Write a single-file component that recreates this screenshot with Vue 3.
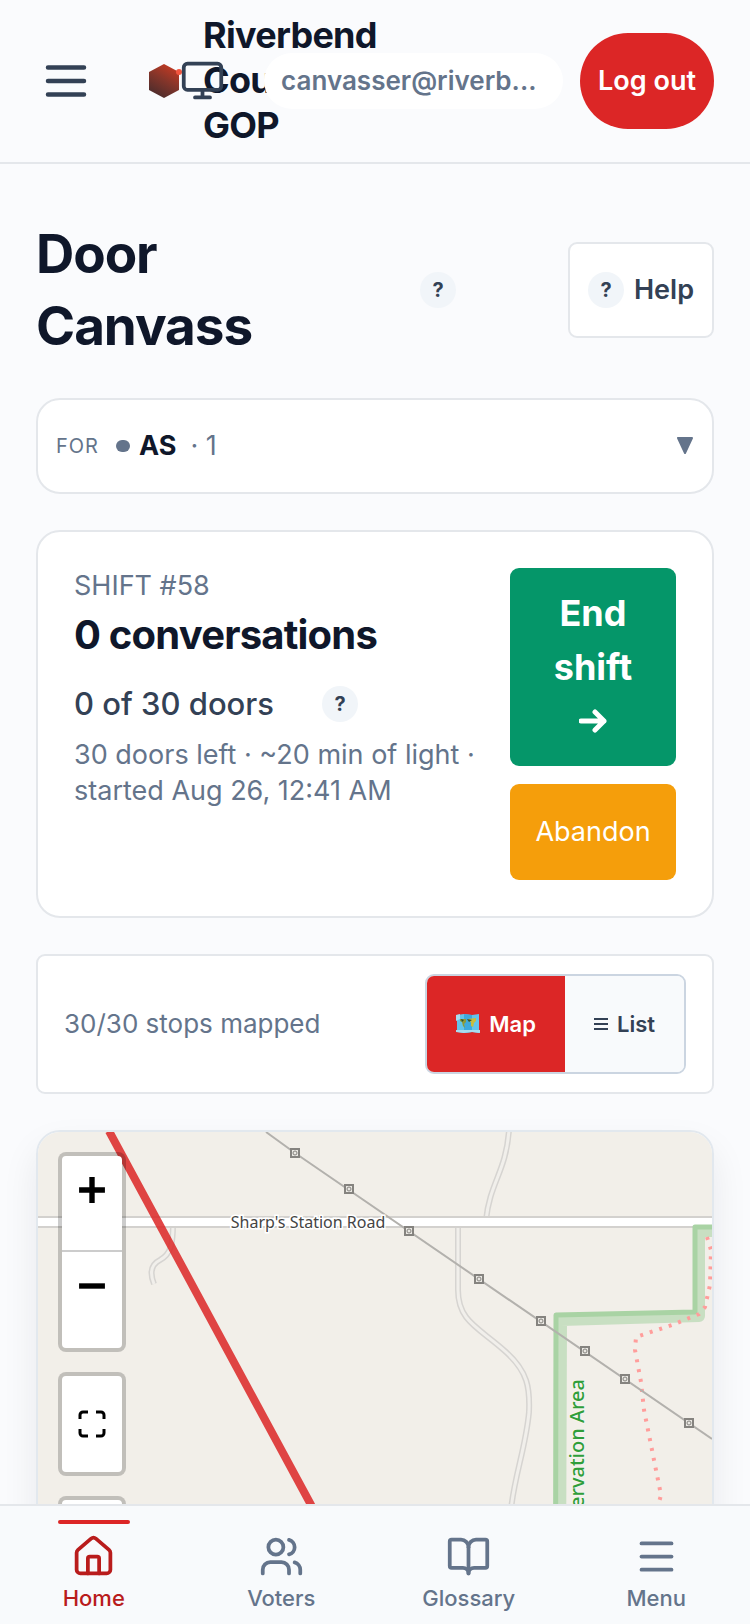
<template>
  <div class="app">
    <header class="topbar">
      <button class="menuBtn" aria-label="Open menu">
        <svg viewBox="0 0 24 24" class="icon iconLg"><path d="M4 6h16M4 12h16M4 18h16" /></svg>
      </button>

      <div class="brand">
        <svg class="logo" viewBox="0 0 34 34">
          <defs>
            <linearGradient id="hex" x1="0.8" y1="0" x2="0.3" y2="1">
              <stop offset="0" stop-color="#c93a22" />
              <stop offset="0.5" stop-color="#84352a" />
              <stop offset="1" stop-color="#4a2c2c" />
            </linearGradient>
          </defs>
          <path d="M15 0 30 8v18L15 34 0 26V8z" fill="url(#hex)" />
          <circle cx="30" cy="8" r="3" fill="#f2563f" />
        </svg>
        <span class="brandName">Riverbend County GOP</span>
      </div>

      <div class="actions">
        <button class="themeBtn" aria-label="Use system theme">
          <svg viewBox="0 0 24 24" class="icon">
            <rect x="2" y="3" width="20" height="14" rx="2" />
            <path d="M8 21h8M12 17v4" />
          </svg>
        </button>
        <span class="email">canvasser@riverb...</span>
        <button class="logout">Log out</button>
      </div>
    </header>

    <main class="content">
      <div class="titleRow">
        <div class="titleGroup">
          <h1>Door Canvass</h1>
          <button class="hint" aria-label="About door canvass"><span class="dot">?</span></button>
        </div>
        <button class="help"><span class="dot">?</span>Help</button>
      </div>

      <button class="picker">
        <span class="pickerLabel">FOR</span>
        <span class="pickerDot"></span>
        <strong>AS</strong>
        <span class="pickerCount">· 1</span>
        <svg class="caret" viewBox="0 0 18 18"><path d="M2 1h14L9 16z" /></svg>
      </button>

      <section class="card shift">
        <div class="shiftInfo">
          <p class="muted">SHIFT #58</p>
          <h2>0 conversations</h2>
          <div class="doors">
            <span>0 of 30 doors</span>
            <button class="hint" aria-label="About doors"><span class="dot">?</span></button>
          </div>
          <p class="muted">30 doors left · ~20 min of light · started Aug 26, 12:41 AM</p>
        </div>
        <div class="shiftActions">
          <button class="endShift">
            End shift
            <svg viewBox="0 0 28 24"><path d="M2 12h23M16 3l9 9-9 9" /></svg>
          </button>
          <button class="abandon">Abandon</button>
        </div>
      </section>

      <section class="card stops">
        <span class="stopCount">30/30 stops mapped</span>
        <div class="toggle">
          <button :class="{ active: view === 'map' }" @click="view = 'map'">
            <svg class="mapEmoji" viewBox="0 0 24 20">
              <path d="M1 1 8 0l8 1 7-1v19l-7-1-8 1-7-1z" fill="#62c4ea" />
              <path d="M8 0l8 1v17l-8 1z" fill="#3da9dc" />
              <path d="M0 1l4-1v5l-4 2zM0 16l24 0v3l-8-1-8 1-8-1z" fill="#a9dcef" />
              <path d="M4 5l6 0 0 3-2 2 1 4-2-2-1-4-2-1z" fill="#8f9a35" />
              <path d="M12 5l8-1 0 3-2 2-1 4-2-1v-4l-3-1z" fill="#c8bd3c" />
              <path d="M11 5l5 1-3 2zM5 5l3 1-2 2z" fill="#2b4f36" />
            </svg>
            Map
          </button>
          <button :class="{ active: view === 'list' }" @click="view = 'list'">
            <svg class="listIcon" viewBox="0 0 14 14"><path d="M0 2h14M0 7h14M0 12h14" /></svg>
            List
          </button>
        </div>
      </section>

      <section class="map">
        <svg class="tiles" viewBox="0 0 674 720" preserveAspectRatio="xMidYMin slice">
          <rect width="674" height="720" fill="#f2efe9" />

          <!-- tracks -->
          <g fill="none">
            <g v-for="(d, i) in tracks" :key="i">
              <path :d="d" stroke="#d6d4d1" stroke-width="6" />
              <path :d="d" stroke="#f1efeb" stroke-width="3" />
            </g>
          </g>

          <!-- main road -->
          <path d="M0 90H674" stroke="#d3d1ce" stroke-width="12" />
          <path d="M0 90H674" stroke="#fff" stroke-width="8" />

          <!-- conservation area -->
          <g fill="none">
            <path d="M674 99H661V184L523 188 521 720" stroke="#c8dfc2" stroke-width="12" stroke-linejoin="round" />
            <path d="M674 95H657V180L518 183 517 720" stroke="#a9d3a4" stroke-width="5" stroke-linejoin="round" />
            <path
              d="M669 105 673 118 672 153 667 175 661 182 634 193 598 205 597 218 603 250 606 278 623 363 620 374"
              stroke="#ff9d9b" stroke-width="4" stroke-dasharray="3 7"
            />
          </g>

          <!-- power line -->
          <path d="M228 0 257 21 674 307" fill="none" stroke="#b3b1ad" stroke-width="2" />
          <g v-for="[x, y] in towers" :key="x">
            <rect :x="x - 4" :y="y - 4" width="8" height="8" fill="#e9e7e2" stroke="#85837f" stroke-width="2" />
            <circle :cx="x" :cy="y" r="2" fill="none" stroke="#85837f" />
          </g>

          <text class="roadName" x="270" y="96" text-anchor="middle">Sharp's Station Road</text>
          <text class="areaName" text-anchor="end" transform="translate(546 247) rotate(-90)">Conservation Area</text>

          <path d="M71 -1 272 371 461 720" fill="none" stroke="#dc2626" stroke-opacity="0.85" stroke-width="8" />
        </svg>

        <div class="controls">
          <div class="controlBox">
            <button aria-label="Zoom in">
              <svg viewBox="0 0 26 26"><path d="M1 13h24M13 1v24" stroke-width="5" /></svg>
            </button>
            <button aria-label="Zoom out">
              <svg viewBox="0 0 26 26"><path d="M1 13h24" stroke-width="5" /></svg>
            </button>
          </div>
          <div class="controlBox">
            <button aria-label="Full screen" class="centered">
              <svg viewBox="0 0 28 28">
                <path d="M2 9V5a3 3 0 0 1 3-3h5M18 2h5a3 3 0 0 1 3 3v4M26 19v4a3 3 0 0 1-3 3h-5M10 26H5a3 3 0 0 1-3-3v-4" stroke-width="3" />
              </svg>
            </button>
          </div>
          <div class="controlBox">
            <button aria-label="Locate me"></button>
          </div>
        </div>
      </section>
    </main>

    <nav class="tabs">
      <a v-for="tab in tabs" :key="tab.label" href="#" :class="{ current: tab.label === current }" @click.prevent="current = tab.label">
        <svg viewBox="0 0 24 24" class="icon">
          <path v-for="d in tab.paths" :key="d" :d="d" />
        </svg>
        {{ tab.label }}
      </a>
    </nav>
  </div>
</template>

<script setup>
import { ref } from 'vue'

const view = ref('map')
const current = ref('Home')

const tabs = [
  {
    label: 'Home',
    paths: [
      'M15 21v-8a1 1 0 0 0-1-1h-4a1 1 0 0 0-1 1v8',
      'M3 10a2 2 0 0 1 .709-1.528l7-5.999a2 2 0 0 1 2.582 0l7 5.999A2 2 0 0 1 21 10v9a2 2 0 0 1-2 2H5a2 2 0 0 1-2-2z',
    ],
  },
  {
    label: 'Voters',
    paths: [
      'M16 21v-2a4 4 0 0 0-4-4H6a4 4 0 0 0-4 4v2',
      'M5 7a4 4 0 1 0 8 0a4 4 0 1 0-8 0',
      'M22 21v-2a4 4 0 0 0-3-3.87',
      'M16 3.13a4 4 0 0 1 0 7.75',
    ],
  },
  {
    label: 'Glossary',
    paths: [
      'M12 7v14',
      'M3 18a1 1 0 0 1-1-1V4a1 1 0 0 1 1-1h5a4 4 0 0 1 4 4 4 4 0 0 1 4-4h5a1 1 0 0 1 1 1v13a1 1 0 0 1-1 1h-6a3 3 0 0 0-3 3 3 3 0 0 0-3-3z',
    ],
  },
  { label: 'Menu', paths: ['M4 5h16', 'M4 12h16', 'M4 19h16'] },
]

const towers = [[257, 21], [311, 57], [371, 99], [441, 147], [503, 189], [547, 219], [587, 247], [651, 291]]

const tracks = [
  'M471 -2C468 40 452 50 448 88',
  'M420 92V158C420 190 442 196 468 220C490 240 492 256 491 280C488 315 476 345 473 378',
  'M135 92C135 112 133 122 122 128C112 133 112 142 116 152',
]
</script>

<style>
body {
  margin: 0;
  background: #fafbfd;
}
</style>

<style scoped>
.app {
  display: flex;
  flex-direction: column;
  height: 100vh;
  background: #fafbfd;
  color: #0f172a;
  font-family: Inter, "Liberation Sans", sans-serif;
  font-size: 27px;
  line-height: 36px;
}

* {
  box-sizing: border-box;
}

button {
  font: inherit;
  color: inherit;
  background: none;
  border: none;
  padding: 0;
  cursor: pointer;
}

h1, h2, p {
  margin: 0;
}

.icon {
  display: block;
  width: 45px;
  height: 45px;
  fill: none;
  stroke: currentColor;
  stroke-width: 2;
  stroke-linecap: round;
  stroke-linejoin: round;
}

.iconLg {
  width: 54px;
  height: 54px;
}

/* top bar */
.topbar {
  display: flex;
  align-items: center;
  padding: 13px 36px 14px 18px;
  border-bottom: 2px solid #e4e7eb;
}

.menuBtn {
  display: flex;
  align-items: center;
  justify-content: center;
  width: 96px;
  height: 96px;
  margin-right: 35px;
  color: #334155;
}

.brand {
  display: flex;
  flex: 1;
  align-items: center;
  gap: 20px;
  min-width: 0;
}

.logo {
  flex: none;
  width: 34px;
  height: 34px;
}

.brandName {
  flex: none;
  width: min-content;
  font-size: 36px;
  font-weight: 700;
  line-height: 45px;
  letter-spacing: -0.02em;
}

.actions {
  display: flex;
  align-items: center;
  gap: 17px;
  z-index: 1;
}

.themeBtn {
  margin-right: 22px;
  color: #334155;
}

.email {
  min-width: 299px;
  padding: 10px 17px;
  border-radius: 28px;
  background: #fff;
  color: #64748b;
  font-weight: 600;
  font-size: 26px;
}

.logout {
  height: 96px;
  padding: 0 18px;
  border-radius: 48px;
  background: #dc2626;
  color: #fff;
  font-weight: 600;
}

/* page */
.content {
  display: flex;
  flex: 1;
  flex-direction: column;
  gap: 36px;
  min-height: 0;
  padding: 54px 36px 36px;
  overflow-y: auto;
  scrollbar-width: none;
}

.content > * {
  flex: none;
}

.titleRow {
  display: flex;
  align-items: center;
  justify-content: space-between;
}

.titleGroup {
  display: flex;
  align-items: center;
  gap: 36px;
}

h1 {
  flex: 0 1 318px;
  font-size: 53px;
  font-weight: 700;
  line-height: 72px;
  letter-spacing: -0.02em;
}

.hint {
  display: flex;
  align-items: center;
  justify-content: center;
  width: 96px;
  height: 48px;
}

.dot {
  width: 36px;
  height: 36px;
  border-radius: 50%;
  background: #f1f5f9;
  color: #334155;
  font-size: 20px;
  font-weight: 700;
  text-align: center;
}

.help {
  display: flex;
  align-items: center;
  gap: 10px;
  height: 96px;
  padding: 0 18px;
  border: 2px solid #e4e7eb;
  border-radius: 9px;
  background: #fff;
  color: #334155;
  font-weight: 600;
}

.picker {
  display: flex;
  align-items: center;
  gap: 9px;
  height: 96px;
  padding: 0 18px;
  border: 2px solid #e4e7eb;
  border-radius: 24px;
  background: #fff;
}

.pickerLabel {
  margin-right: 8px;
  color: #64748b;
  font-size: 20px;
  letter-spacing: 1px;
}

.pickerDot {
  width: 14px;
  height: 12px;
  border-radius: 6px;
  background: #64748b;
}

.pickerCount {
  margin-left: 5px;
  color: #64748b;
}

.caret {
  width: 18px;
  height: 18px;
  margin-left: auto;
  fill: #64748b;
  stroke: #64748b;
  stroke-width: 2;
  stroke-linejoin: round;
}

.card {
  border: 2px solid #e4e7eb;
  background: #fff;
}

.muted {
  color: #64748b;
}

.shift {
  display: flex;
  gap: 18px;
  padding: 36px;
  border-radius: 24px;
}

.shiftInfo {
  flex: 1;
  min-width: 0;
}

h2 {
  margin-top: 6px;
  font-size: 40px;
  font-weight: 700;
  line-height: 50px;
  letter-spacing: -0.02em;
}

.doors {
  display: flex;
  align-items: center;
  gap: 18px;
  margin: 20px 0 9px;
  color: #334155;
  font-size: 31px;
  font-weight: 500;
}

.shiftActions {
  display: flex;
  flex-direction: column;
  gap: 18px;
  width: 166px;
}

.shiftActions button {
  border-radius: 9px;
  color: #fff;
}

.endShift {
  padding: 18px 36px;
  background: #059669;
  font-size: 36px;
  font-weight: 700;
  line-height: 54px;
}

.endShift svg {
  display: block;
  width: 28px;
  height: 54px;
  margin: 0 auto;
  fill: none;
  stroke: #fff;
  stroke-width: 5;
  stroke-linecap: round;
  stroke-linejoin: round;
}

.abandon {
  height: 96px;
  background: #f59e0b;
}

.stops {
  display: flex;
  align-items: center;
  justify-content: space-between;
  padding: 18px 26px;
  border-radius: 9px;
}

.stopCount {
  color: #64748b;
  font-size: 26px;
}

.toggle {
  display: flex;
  border: 2px solid #cbd5e1;
  border-radius: 9px;
  overflow: hidden;
}

.toggle button {
  display: flex;
  align-items: center;
  gap: 9px;
  height: 96px;
  padding: 0 29px;
  background: #f8fafc;
  color: #334155;
  font-size: 22px;
  font-weight: 600;
}

.toggle button.active {
  background: #dc2626;
  color: #fff;
}

.mapEmoji {
  width: 24px;
  height: 20px;
}

.listIcon {
  width: 14px;
  height: 14px;
  stroke: currentColor;
  stroke-width: 2;
}

/* map */
.map {
  position: relative;
  border: 2px solid #e2e8ee;
  border-radius: 24px;
  box-shadow: 0 18px 36px rgba(15, 23, 42, 0.08);
  overflow: hidden;
}

.tiles {
  display: block;
  width: 100%;
  height: 720px;
}

.roadName {
  font: 16px "Noto Sans", sans-serif;
  fill: #444;
  stroke: #fff;
  stroke-width: 3;
  paint-order: stroke;
}

.areaName {
  font: 500 20px "Noto Sans", sans-serif;
  fill: #2f9e3a;
  stroke: #f5f3ee;
  stroke-width: 2;
  paint-order: stroke;
}

.controls {
  position: absolute;
  top: 20px;
  left: 20px;
  display: flex;
  flex-direction: column;
  gap: 20px;
}

.controlBox {
  width: 68px;
  border: 4px solid rgba(0, 0, 0, 0.2);
  border-radius: 8px;
  background: #fff;
  background-clip: padding-box;
}

.controlBox button {
  display: flex;
  justify-content: center;
  width: 100%;
  height: 96px;
  padding-top: 20px;
}

.controlBox button:not(:last-child) {
  border-bottom: 2px solid #ccc;
}

.controlBox .centered {
  align-items: center;
  padding: 0;
}

.controlBox svg {
  width: 28px;
  height: 28px;
  fill: none;
  stroke: #000;
}

/* bottom tabs */
.tabs {
  display: grid;
  grid-template-columns: repeat(4, 1fr);
  height: 120px;
  border-top: 2px solid #e4e7eb;
  background: #f8fafc;
  z-index: 1;
}

.tabs a {
  position: relative;
  display: flex;
  flex-direction: column;
  align-items: center;
  gap: 1px;
  padding-top: 28px;
  color: #64748b;
  font-size: 22px;
  font-weight: 500;
  text-decoration: none;
}

.tabs .current {
  color: #b91c1c;
}

.tabs .current::before {
  content: '';
  position: absolute;
  top: 14px;
  width: 72px;
  height: 4px;
  border-radius: 2px;
  background: #dc2626;
}
</style>
